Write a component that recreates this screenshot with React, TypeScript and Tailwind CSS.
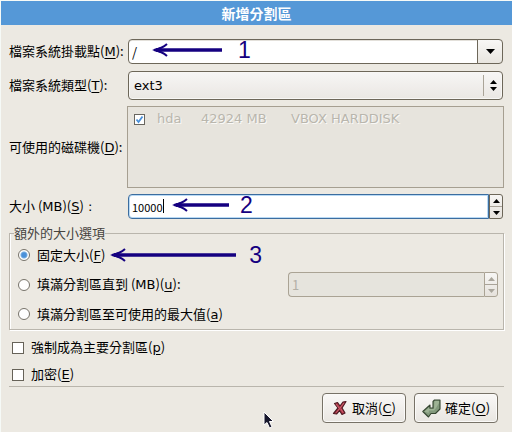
import type { ReactNode } from "react";

function Latin({ children }: { children: ReactNode }) {
  return <span className="font-['DejaVu_Sans','Noto_Sans_CJK_TC',sans-serif]">{children}</span>;
}

function Key({ children }: { children: string }) {
  return (
    <>
      (<u className="font-['DejaVu_Sans','Noto_Sans_CJK_TC',sans-serif] underline-offset-2">{children}</u>)
    </>
  );
}

function Triangle({ up = false, className = "" }: { up?: boolean; className?: string }) {
  return (
    <svg width="7" height="4" viewBox="0 0 7 4" className={className} aria-hidden="true">
      <path d={up ? "M0 4L3.5 0L7 4Z" : "M0 0L3.5 4L7 0Z"} fill="currentColor" />
    </svg>
  );
}

function Arrow({ length, children }: { length: number; children: string }) {
  return (
    <>
      <svg width={length} height="16" viewBox={`0 0 ${length} 16`} fill="none" aria-hidden="true">
        <path d={`M4 8H${length}`} stroke="#150080" strokeWidth="3.5" />
        <path d="M15 2Q10 6.500 2 8Q10 9.500 15 14" stroke="#150080" strokeWidth="2" />
        <path d="M0 8L9 5V11Z" fill="#150080" />
      </svg>
      <span className="font-['Liberation_Sans',sans-serif] text-[23px] leading-6 text-[#150080]">{children}</span>
    </>
  );
}

function Steppers({ disabled = false }: { disabled?: boolean }) {
  return (
    <div
      className={
        "flex w-[14px] flex-col rounded-r-[3px] border bg-linear-to-b from-[#f7f6f4] to-[#e6e2dc] " +
        (disabled ? "border-[#aaa394] text-[#aaa69c]" : "border-[#6d6759] text-black")
      }
    >
      <button type="button" aria-label="增加" disabled={disabled} className="flex flex-1 items-center justify-center">
        <Triangle up />
      </button>
      <div className="h-px bg-[#a9a398]" />
      <button type="button" aria-label="減少" disabled={disabled} className="flex flex-1 items-center justify-center">
        <Triangle />
      </button>
    </div>
  );
}

function Radio({ id, checked = false, children }: { id: string; checked?: boolean; children: ReactNode }) {
  return (
    <div className="flex items-center gap-[7px]">
      <input
        id={id}
        type="radio"
        name="size-option"
        defaultChecked={checked}
        className="size-3 shrink-0 appearance-none rounded-full border border-[#77736a] bg-white checked:bg-[radial-gradient(circle,#4a90d9_0_2px,#78aee2_3px,#ffffff_4px)]"
      />
      <label htmlFor={id} className="whitespace-nowrap">{children}</label>
    </div>
  );
}

function Check({ id, children }: { id: string; children: ReactNode }) {
  return (
    <div className="flex items-center gap-[7px] pl-[3px]">
      <input id={id} type="checkbox" className="size-3 shrink-0 appearance-none border border-[#666258] bg-white checked:bg-[#4a90d9]" />
      <label htmlFor={id}>{children}</label>
    </div>
  );
}

const label = "w-[119px] shrink-0 whitespace-nowrap";
const actionButton =
  "flex h-[30px] w-[84px] items-center justify-center gap-1 rounded-[4px] border border-[#777267] bg-linear-to-b from-[#f9f8f7] to-[#e9e6e1] whitespace-nowrap shadow-[inset_0_0_0_1px_#fbfaf8]";

export default function App() {
  return (
    <main className="relative border-t border-l border-[#f6faf7] bg-[#ece9e2] pb-[9px] font-['Noto_Sans_CJK_TC',sans-serif] text-[13px] leading-5 text-black">
      <header className="flex h-6 items-center justify-center bg-[#5598d7] text-white">
        <h1 className="text-[14px] font-bold">新增分割區</h1>
      </header>

      <form className="px-2 pt-[14px]">
        <div className="flex flex-col gap-1.5">
          <div className="flex h-[26px] items-start">
            <label htmlFor="mount" className={label + " leading-6"}>檔案系統掛載點<Key>M</Key>:</label>
            <div className="relative mr-px flex h-[25px] min-w-0 flex-1">
              <input
                id="mount"
                defaultValue="/"
                className="min-w-0 flex-1 rounded-l-[4px] border border-[#6d6759] bg-white px-[3px] shadow-[inset_0_1px_0_#e3e0da] outline-none"
              />
              <button
                type="button"
                aria-label="掛載點清單"
                className="-ml-px flex w-[26px] items-center justify-center rounded-r-[4px] border border-[#6d6759] bg-linear-to-b from-[#f8f7f5] to-[#e8e5df]"
              >
                <svg width="9" height="5" viewBox="0 0 9 5" aria-hidden="true"><path d="M0 0H9L4.500 5Z" /></svg>
              </button>
              <div className="pointer-events-none absolute -top-px left-6 flex items-center gap-4"><Arrow length={70}>1</Arrow></div>
            </div>
          </div>

          <div className="flex items-center">
            <label htmlFor="fstype" className={label}>檔案系統類型<Key>T</Key>:</label>
            <div className="relative mr-px h-[29px] flex-1">
              <select
                id="fstype"
                className="size-full appearance-none rounded-[4px] border border-[#6d6759] bg-linear-to-b from-[#f7f6f5] to-[#eae7e3] px-[5px] font-['DejaVu_Sans',sans-serif] shadow-[inset_0_0_0_1px_#f8f7f5]"
              >
                <option>ext3</option>
              </select>
              <div className="pointer-events-none absolute inset-y-1 right-0 flex w-5 flex-col items-center justify-center gap-[3px] border-l border-[#aaa498]">
                <Triangle up />
                <Triangle />
              </div>
            </div>
          </div>

          <div className="flex items-center">
            <div className={label}>可使用的磁碟機<Key>D</Key>:</div>
            <div className="-ml-px h-[82px] flex-1 border border-[#a69f91] bg-[#e7e4dd] pt-0.5 pl-1.5">
              <table className="font-['DejaVu_Sans',sans-serif] text-[#b9b6ad] [text-shadow:1px_1px_0_#faf9f7]">
                <tbody>
                  <tr>
                    <td className="w-[23px]">
                      <span className="relative block size-[11px]">
                        <input type="checkbox" aria-label="hda" defaultChecked disabled className="absolute inset-0 size-[11px] appearance-none border border-[#69665f] bg-white" />
                        <svg width="11" height="11" viewBox="0 0 11 11" fill="none" className="absolute inset-0" aria-hidden="true">
                          <path d="M2.500 5.500L4.500 8L8.500 2.500" stroke="#4a90d9" strokeWidth="1.800" />
                        </svg>
                      </span>
                    </td>
                    <td className="w-[44px]">hda</td>
                    <td className="w-[90px]">42924 MB</td>
                    <td>VBOX HARDDISK</td>
                  </tr>
                </tbody>
              </table>
            </div>
          </div>

          <div className="flex items-center">
            <label htmlFor="size" className={label}>大小 (<Latin>MB</Latin>)<Key>S</Key><Latin> :</Latin></label>
            <div className="relative mr-px flex h-[25px] min-w-0 flex-1">
              <input
                id="size"
                defaultValue="10000"
                className="min-w-0 flex-1 rounded-l-[4px] border border-[#3c6d9f] bg-white px-[3px] text-[11px] shadow-[inset_0_0_0_1px_#b9daf5] outline-none"
              />
              <Steppers />
              <div className="pointer-events-none absolute top-[5px] left-[35px] h-[14px] w-px bg-black" />
              <div className="pointer-events-none absolute -top-px left-11 flex items-center gap-[11px]"><Arrow length={57}>2</Arrow></div>
            </div>
          </div>
        </div>

        <fieldset className="relative mt-1 border border-[#b9b5ac] px-2 pt-px pb-1 shadow-[1px_1px_0_#ffffff,inset_1px_0_0_#ffffff]">
          <legend className="-ml-1 bg-[#ece9e2] text-[#46443f]">額外的大小選項</legend>
          <div className="flex h-[22px] items-center">
            <Radio id="fixed" checked>固定大小<Key>F</Key></Radio>
            <div className="pointer-events-none ml-[5px] flex items-center gap-[13px]"><Arrow length={126}>3</Arrow></div>
          </div>
          <div className="flex h-[37px] items-center">
            <Radio id="up-to">填滿分割區直到 (<Latin>MB</Latin>)<Key>u</Key>:</Radio>
            <div className="mr-[-3px] ml-auto flex h-[25px] w-[210px]">
              <input
                aria-label="填滿分割區直到 (MB)"
                defaultValue="1"
                disabled
                className="min-w-0 flex-1 rounded-l-[4px] border border-r-0 border-[#aaa394] bg-[#e6e4dd] px-[3px] text-[#b3b0a7]"
              />
              <Steppers disabled />
            </div>
          </div>
          <div className="flex h-[22px] items-center">
            <Radio id="maximum">填滿分割區至可使用的最大值<Key>a</Key></Radio>
          </div>
        </fieldset>

        <div className="mt-[7px] flex flex-col gap-1.5 border-b border-[#b9b5ac] pb-px">
          <Check id="primary">強制成為主要分割區<Key>p</Key></Check>
          <Check id="encrypt">加密<Key>E</Key></Check>
        </div>

        <div className="flex justify-end gap-2 pt-1.5 pr-1.5">
          <button type="button" className={actionButton}>
            <svg width="16" height="16" viewBox="0 0 16 16" aria-hidden="true">
              <path d="M2.500 3.500L5.500 2.500L8 6L11 2L14 1.500L10 8L13 13L10 14.500L7.500 10.500L4.500 14L1.500 13.500L6 8Z" fill="#b5394b" stroke="#4d1a22" strokeWidth="1.200" strokeLinejoin="round" />
              <path d="M4 4L7 8M12 3L4.500 12.500M9 9L11 12.500" stroke="#d06a76" strokeWidth=".8" />
            </svg>
            <span>取消<Key>C</Key></span>
          </button>
          <button type="submit" className={actionButton}>
            <svg width="19" height="19" viewBox="0 0 19 19" aria-hidden="true">
              <path d="M.8 12.500L8 6V9H11V2.500L12.500 1H18V10L13.500 14.500H9L6.500 18Z" fill="#82997c" stroke="#354631" strokeWidth="1.100" strokeLinejoin="round" />
              <path d="M12.500 2H17V4L14 9L12 11.500H7L6.500 14L2.500 12.500L7 8.500V10H12Z" fill="#aabd9f" opacity=".7" />
            </svg>
            <span>確定<Key>O</Key></span>
          </button>
        </div>
      </form>

      <svg width="12" height="19" viewBox="0 0 12 19" className="pointer-events-none absolute top-[410px] left-[262px]" aria-hidden="true">
        <path d="M1 1V14L4 11.500L6.500 17L9 16L6.500 10.500H10.500Z" fill="#17172c" stroke="#ffffff" strokeWidth="1" />
      </svg>
    </main>
  );
}
